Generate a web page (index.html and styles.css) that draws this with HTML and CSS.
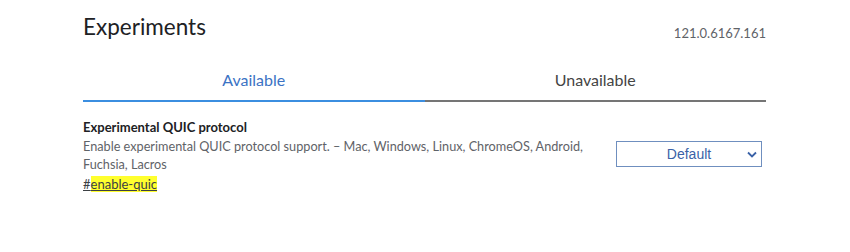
FILE: index.html
```html
<!DOCTYPE html>
<html lang="en">
<head>
    <meta charset="UTF-8">
    <meta name="viewport" content="width=device-width, initial-scale=1.0">
    <title>Experiments</title>
    <link rel="stylesheet" href="styles.css">
</head>
<body>
    <div id="container">
        <!-- Header -->
        <div class="header">
            <h1 class="title">Experiments</h1>
            <span class="version">121.0.6167.161</span>
        </div>
        <!-- Tabs -->
        <div class="tabs">
            <div class="tab active">Available</div>
            <div class="tab">Unavailable</div>
        </div>
        <!-- Experiment list -->
        <div class="experiment">
            <div class="exp-text">
                <div class="exp-name">Experimental QUIC protocol</div>
                <p class="exp-desc">Enable experimental QUIC protocol support. – Mac, Windows, Linux, ChromeOS, Android, Fuchsia, Lacros</p>
                <a class="exp-link" href="#enable-quic">#<span class="hl">enable-quic</span></a>
            </div>
            <div class="exp-select">
                <span>Default</span>
                <svg class="chevron" width="10" height="7" viewBox="0 0 10 7">
                    <path d="M1 1.5 L5 5.5 L9 1.5" fill="none" stroke="#3a62a7" stroke-width="1.8"/>
                </svg>
            </div>
        </div>
    </div>
</body>
</html>
```

FILE: styles.css
```css
body{
    margin: 0;
    background-color: white;
    font-family: Lato, "Open Sans", sans-serif;
    color: #202124;
}
#container{
    padding: 0 84px 0 83px;
}

/* Header */
.header{
    display: flex;
    justify-content: space-between;
    align-items: flex-end;
    padding-top: 13px;
}
.title{
    margin: 0;
    font-size: 22.5px;
    font-weight: normal;
    color: #202124;
    line-height: 28px;
}
.version{
    font-size: 13px;
    line-height: 16px;
    color: #5f6368;
}

/* Tabs */
.tabs{
    display: flex;
    margin-top: 29px;
}
.tab{
    flex: 1;
    text-align: center;
    font-size: 16px;
    color: #444;
    padding-bottom: 11px;
    border-bottom: 2px solid #757575;
}
.tab.active{
    color: #3b73c4;
    border-bottom-color: #3b8ee0;
}

/* Experiment */
.experiment{
    display: flex;
    align-items: center;
    margin-top: 15px;
}
.exp-text{
    flex: 1;
    padding-right: 10px;
    font-size: 13px;
    line-height: 19px;
}
.exp-name{
    font-weight: bold;
    color: #202124;
    line-height: 20px;
}
.exp-desc{
    margin: 0;
    color: #5f6368;
    max-width: 515px;
    font-size: 12.7px;
    line-height: 18px;
}
.exp-link{
    display: inline-block;
    margin-top: 2px;
    color: #3c4043;
}
.hl{
    background-color: #ffff2e;
}
.exp-select{
    width: 144px;
    height: 24px;
    border: 1px solid #6f8fbf;
    display: flex;
    align-items: center;
    justify-content: center;
    position: relative;
    font-family: "Liberation Sans", Arial, sans-serif;
    font-size: 14px;
    color: #3a62a7;
    margin-right: 4px;
    margin-top: -3px;
}
.chevron{
    position: absolute;
    right: 4px;
    top: 9px;
}
```
